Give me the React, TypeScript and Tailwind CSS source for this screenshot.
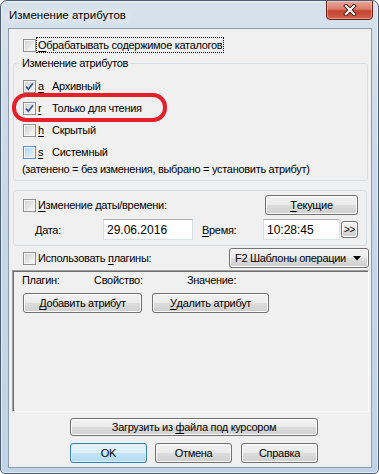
import React from 'react';

type CheckState = 'off' | 'on' | 'shaded';

const Checkbox = ({ state = 'off' }: { state?: CheckState }) => {
  const shaded = state === 'shaded';
  return (
    <div
      className={`w-[13px] h-[13px] shrink-0 border p-[1px] bg-[#f6f6f6] ${
        shaded ? 'border-[#5b8fc7]' : 'border-[#8e8f8f]'
      }`}
    >
      <div
        className={`w-full h-full flex items-center justify-center ${
          shaded
            ? 'bg-[linear-gradient(135deg,#b3d6f5,#e4f2fd)]'
            : 'bg-[linear-gradient(135deg,#d2d2d2,#f8f8f8)]'
        }`}
      >
        {state === 'on' && (
          <svg width="9" height="9" viewBox="0 0 9 9">
            <path d="M1 4.6 L3.4 7.2 L8 1.2" fill="none" stroke="#3b5796" strokeWidth="1.7" />
          </svg>
        )}
      </div>
    </div>
  );
};

const U = ({ children }: { children: React.ReactNode }) => (
  <span className="underline decoration-1 underline-offset-[2px]">{children}</span>
);

const Btn = ({
  children,
  className = '',
  primary = false,
}: {
  children: React.ReactNode;
  className?: string;
  primary?: boolean;
}) => (
  <button
    type="button"
    className={`flex items-center justify-center whitespace-nowrap rounded-[3px] border leading-[14px] text-black ${
      primary
        ? 'border-[#3c7fb1] bg-[linear-gradient(#e8f5fc,#dcf0fb_50%,#c4e5f7_50%,#b1dbf4)] shadow-[inset_0_0_0_1px_#d8eefb]'
        : 'border-[#707070] bg-[linear-gradient(#f2f2f2,#ebebeb_50%,#dddddd_50%,#cfcfcf)] shadow-[inset_0_0_0_1px_#fcfcfc]'
    } ${className}`}
  >
    {children}
  </button>
);

const Field = ({ value, className = '' }: { value: string; className?: string }) => (
  <div
    className={`h-[21px] flex items-center pl-[3px] bg-white border border-[#dbdfe6] border-t-[#abadb3] text-[12px] tracking-normal ${className}`}
  >
    {value}
  </div>
);

const AttrRow = ({ state, letter, label }: { state: CheckState; letter: string; label: string }) => (
  <div className="flex items-center h-[22px] pl-[9px]">
    <Checkbox state={state} />
    <span className="ml-[2px] w-[14px]">
      <U>{letter}</U>
    </span>
    <span>{label}</span>
  </div>
);

export default function App() {
  return (
    <div className="w-[379px] h-[474px] flex flex-col border border-[#4d5d70] rounded-t-[7px] rounded-b-[5px] overflow-hidden bg-[linear-gradient(180deg,#d8e2ec,#cad8e7_35%,#c1d3e6)] shadow-[inset_0_0_0_1px_rgba(255,255,255,0.55)] font-['Liberation_Sans',Arial,sans-serif] text-black">
      {/* Title bar */}
      <div className="h-[27px] flex items-start justify-between">
        <div className="pl-[8px] pt-[6px] text-[11.5px] leading-[16px] [text-shadow:0_0_6px_#fff,0_0_10px_#fff]">
          Изменение атрибутов
        </div>
        <div className="-mt-[1px] mr-[5px] w-[47px] h-[20px] rounded-b-[4px] border border-[#6b1f14] bg-[linear-gradient(#eaa89a,#da7b6c_45%,#c2432f_55%,#cf6350)] shadow-[inset_0_0_0_1px_rgba(255,255,255,0.35)] flex items-center justify-center">
          <svg width="14" height="12" viewBox="0 0 14 12">
            <path d="M3 2 L11 10 M11 2 L3 10" stroke="#4a1a12" strokeWidth="4" strokeLinecap="square" />
            <path d="M3 2 L11 10 M11 2 L3 10" stroke="#ffffff" strokeWidth="2.2" strokeLinecap="square" />
          </svg>
        </div>
      </div>

      {/* Client area */}
      <div className="flex-1 ml-[7px] mr-[6px] mb-[5px] border border-[#8d9cae] bg-[#f0f0f0] flex flex-col text-[11px] leading-[14px] tracking-[-0.3px]">
        <div className="mt-[8px] h-[16px] flex items-center pl-[14px]">
          <Checkbox />
          <span className="ml-[1px] px-[1px] leading-[14px] outline outline-1 outline-dotted outline-black">
            <U>О</U>брабатывать содержимое каталогов
          </span>
        </div>

        {/* Attributes group */}
        <div className="relative mt-[10px] ml-[4px] mr-[3px] h-[118px] border border-[#d5dfe5] rounded-[3px]">
          <div className="-mt-[8px] ml-[6px] px-[2px] w-fit h-[15px] leading-[15px] bg-[#f0f0f0]">
            Изменение атрибутов
          </div>
          <div className="mt-[4px]">
            <AttrRow state="on" letter="a" label="Архивный" />
            <AttrRow state="on" letter="r" label="Только для чтения" />
            <AttrRow state="off" letter="h" label="Скрытый" />
            <AttrRow state="shaded" letter="s" label="Системный" />
          </div>
          <div className="-mt-[1px] h-[14px] pl-[8px]">
            (затенено = без изменения, выбрано = установить атрибут)
          </div>
          <div className="pointer-events-none absolute left-[-2px] top-[29px] w-[155px] h-[29px] border-[4px] border-[#e6202a] rounded-[14px]" />
        </div>

        {/* Date / time group */}
        <div className="mt-[9px] ml-[4px] mr-[4px] h-[56px] border border-[#d5dfe5] rounded-[3px] pt-[4px]">
          <div className="h-[20px] flex items-center justify-between pl-[9px] pr-[8px]">
            <div className="flex items-center">
              <Checkbox />
              <span className="ml-[2px]">
                <U>И</U>зменение даты/времени:
              </span>
            </div>
            <Btn className="w-[93px] h-[20px]">
              <U>Т</U>екущие
            </Btn>
          </div>
          <div className="mt-[4px] h-[21px] flex items-center pl-[21px]">
            <span className="w-[68px]">
              <U>Д</U>ата:
            </span>
            <Field value="29.06.2016" className="w-[90px]" />
            <span className="ml-[9px] w-[61px]">
              <U>В</U>ремя:
            </span>
            <Field value="10:28:45" className="w-[77px]" />
            <Btn className="ml-[1px] w-[17px] h-[17px] text-[10px] text-[#1f3a6b]">&gt;&gt;</Btn>
          </div>
        </div>

        {/* Plugins */}
        <div className="mt-[2px] h-[20px] flex items-center justify-between pl-[14px] pr-[2px]">
          <div className="flex items-center">
            <Checkbox />
            <span className="ml-[2px]">
              Использовать <U>п</U>лагины:
            </span>
          </div>
          <Btn className="w-[140px] h-[20px] !justify-between pl-[5px] pr-[7px]">
            <span>F2 Шаблоны операции</span>
            <svg width="8" height="5" viewBox="0 0 8 5">
              <path d="M0 0 H8 L4 4.5 Z" fill="#000" />
            </svg>
          </Btn>
        </div>

        <div className="mt-[2px] ml-[3px] mr-[2px] h-[142px] border border-[#a0a0a0] border-b-white border-r-white shadow-[inset_1px_1px_0_#6d6d6d]">
          <div className="mt-[2px] h-[14px] flex pl-[9px]">
            <span className="w-[72px]">Плагин:</span>
            <span className="w-[93px]">Свойство:</span>
            <span>Значение:</span>
          </div>
          <div className="mt-[6px] flex gap-[10px] pl-[10px]">
            <Btn className="w-[119px] h-[20px]">
              <U>Д</U>обавить атрибут
            </Btn>
            <Btn className="w-[117px] h-[20px]">
              <U>У</U>далить атрибут
            </Btn>
          </div>
        </div>

        {/* Bottom buttons */}
        <Btn className="mt-[6px] ml-[61px] w-[248px] h-[18px]">
          Загрузить из&nbsp;<U>ф</U>айла под курсором
        </Btn>
        <div className="mt-[7px] ml-[61px] flex h-[20px]">
          <Btn primary className="w-[77px] h-[20px]">
            OK
          </Btn>
          <Btn className="ml-[8px] w-[77px] h-[20px]">Отмена</Btn>
          <Btn className="ml-[9px] w-[77px] h-[20px]">Справка</Btn>
        </div>
      </div>
    </div>
  );
}
